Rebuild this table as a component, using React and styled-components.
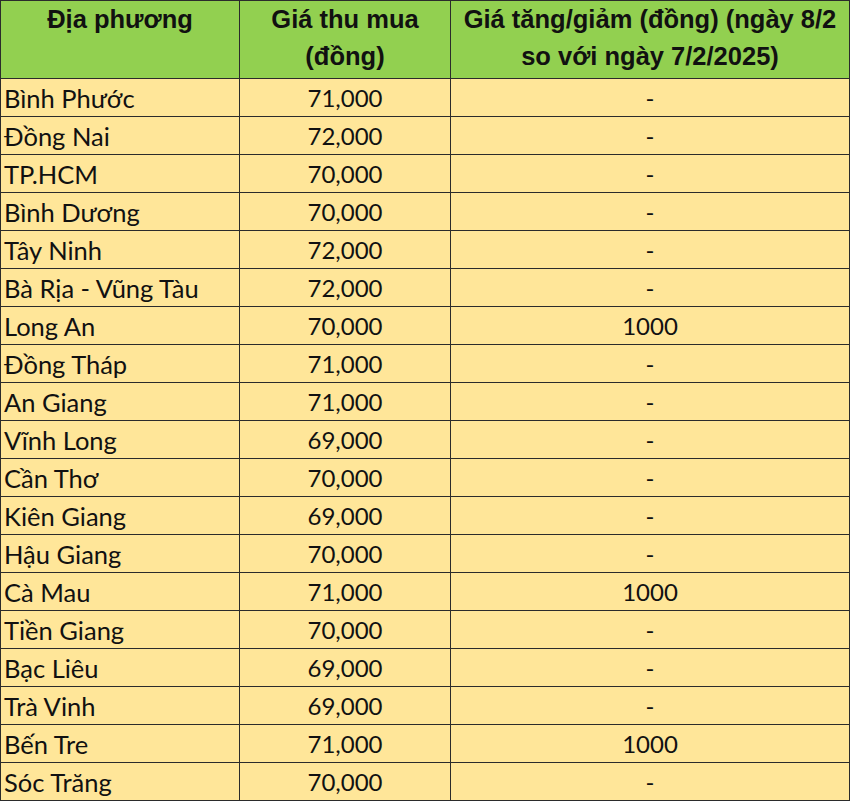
import React from 'react';
import styled, { createGlobalStyle } from 'styled-components';

const GlobalStyle = createGlobalStyle`
  html, body {
    margin: 0;
    padding: 0;
    background: #ffffff;
  }
`;

const colors = {
  header: '#92d050',
  row: '#ffe699',
  border: '#2b2b2b',
  text: '#111111',
};

const Table = styled.table`
  width: 849px;
  table-layout: fixed;
  border-collapse: collapse;
  color: ${colors.text};
`;

const HeadCell = styled.th`
  height: 78px;
  padding: 0 2px;
  box-sizing: border-box;
  background: ${colors.header};
  border: 1px solid ${colors.border};
  font-family: 'Liberation Sans', Arial, sans-serif;
  font-weight: bold;
  font-size: 25.5px;
  line-height: 36.5px;
  text-align: center;
  vertical-align: top;
  white-space: nowrap;
`;

const Cell = styled.td`
  height: 38px;
  padding: 0;
  padding-left: ${props => (props.align === 'left' ? '3px' : '0')};
  box-sizing: border-box;
  background: ${colors.row};
  border: 1px solid ${colors.border};
  font-family: Lato, 'Open Sans', sans-serif;
  font-size: ${props => (props.align === 'left' ? '25.5px' : '24px')};
  line-height: 36px;
  text-align: ${props => props.align || 'center'};
  vertical-align: middle;
  white-space: nowrap;
`;

const rows = [
  ['Bình Phước', '71,000', '-'],
  ['Đồng Nai', '72,000', '-'],
  ['TP.HCM', '70,000', '-'],
  ['Bình Dương', '70,000', '-'],
  ['Tây Ninh', '72,000', '-'],
  ['Bà Rịa - Vũng Tàu', '72,000', '-'],
  ['Long An', '70,000', '1000'],
  ['Đồng Tháp', '71,000', '-'],
  ['An Giang', '71,000', '-'],
  ['Vĩnh Long', '69,000', '-'],
  ['Cần Thơ', '70,000', '-'],
  ['Kiên Giang', '69,000', '-'],
  ['Hậu Giang', '70,000', '-'],
  ['Cà Mau', '71,000', '1000'],
  ['Tiền Giang', '70,000', '-'],
  ['Bạc Liêu', '69,000', '-'],
  ['Trà Vinh', '69,000', '-'],
  ['Bến Tre', '71,000', '1000'],
  ['Sóc Trăng', '70,000', '-'],
];

export default function App() {
  return (
    <>
      <GlobalStyle />
      <Table>
        <colgroup>
          <col style={{ width: 239 }} />
          <col style={{ width: 211 }} />
          <col style={{ width: 399 }} />
        </colgroup>
        <thead>
          <tr>
            <HeadCell>Địa phương</HeadCell>
            <HeadCell>
              Giá thu mua
              <br />
              (đồng)
            </HeadCell>
            <HeadCell>
              Giá tăng/giảm (đồng) (ngày 8/2
              <br />
              so với ngày 7/2/2025)
            </HeadCell>
          </tr>
        </thead>
        <tbody>
          {rows.map(([place, price, change]) => (
            <tr key={place}>
              <Cell align="left">{place}</Cell>
              <Cell>{price}</Cell>
              <Cell>{change}</Cell>
            </tr>
          ))}
        </tbody>
      </Table>
    </>
  );
}
